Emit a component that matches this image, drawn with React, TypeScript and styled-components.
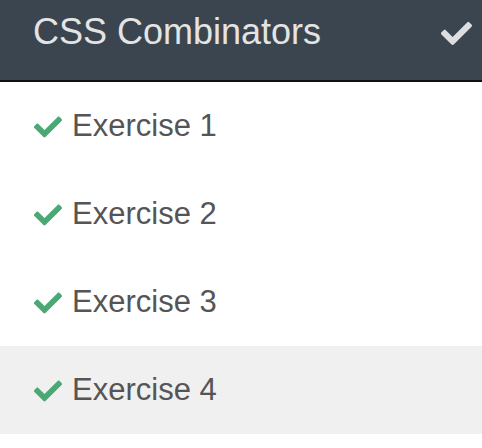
import React from "react";
import styled, { createGlobalStyle } from "styled-components";
import { FaCheck } from "react-icons/fa";

const GlobalStyle = createGlobalStyle`
  body {
    margin: 0;
    background: #ffffff;
    font-family: "Liberation Sans", Arial, sans-serif;
  }
`;

const Panel = styled.div`
  width: 482px;
  display: flex;
  flex-direction: column;
`;

const Header = styled.div`
  height: 82px;
  box-sizing: border-box;
  padding: 12px 10px 0 33px;
  display: flex;
  justify-content: space-between;
  align-items: flex-start;
  background: #3a4550;
  border-bottom: 2px solid #111111;
`;

const Title = styled.div`
  font-size: 36px;
  color: #e4e4e4;
  line-height: 40px;
`;

const HeaderCheck = styled(FaCheck)`
  margin-top: 6px;
  color: #dedede;
`;

const Row = styled.div<{ $active?: boolean }>`
  height: 88px;
  display: flex;
  align-items: center;
  gap: 10px;
  padding-left: 34px;
  background: ${(p) => (p.$active ? "#f0f0f0" : "#ffffff")};
`;

const RowCheck = styled(FaCheck)`
  color: #4aa874;
  margin-top: 2px;
`;

const Label = styled.span`
  font-size: 31px;
  color: #555555;
`;

const exercises = ["Exercise 1", "Exercise 2", "Exercise 3", "Exercise 4"];

const App = () => {
  return (
    <>
      <GlobalStyle />
      <Panel>
        <Header>
          <Title>CSS Combinators</Title>
          <HeaderCheck size={31} />
        </Header>
        {exercises.map((name, i) => (
          <Row key={name} $active={i === 3}>
            <RowCheck size={28} />
            <Label>{name}</Label>
          </Row>
        ))}
      </Panel>
    </>
  );
};

export default App;
